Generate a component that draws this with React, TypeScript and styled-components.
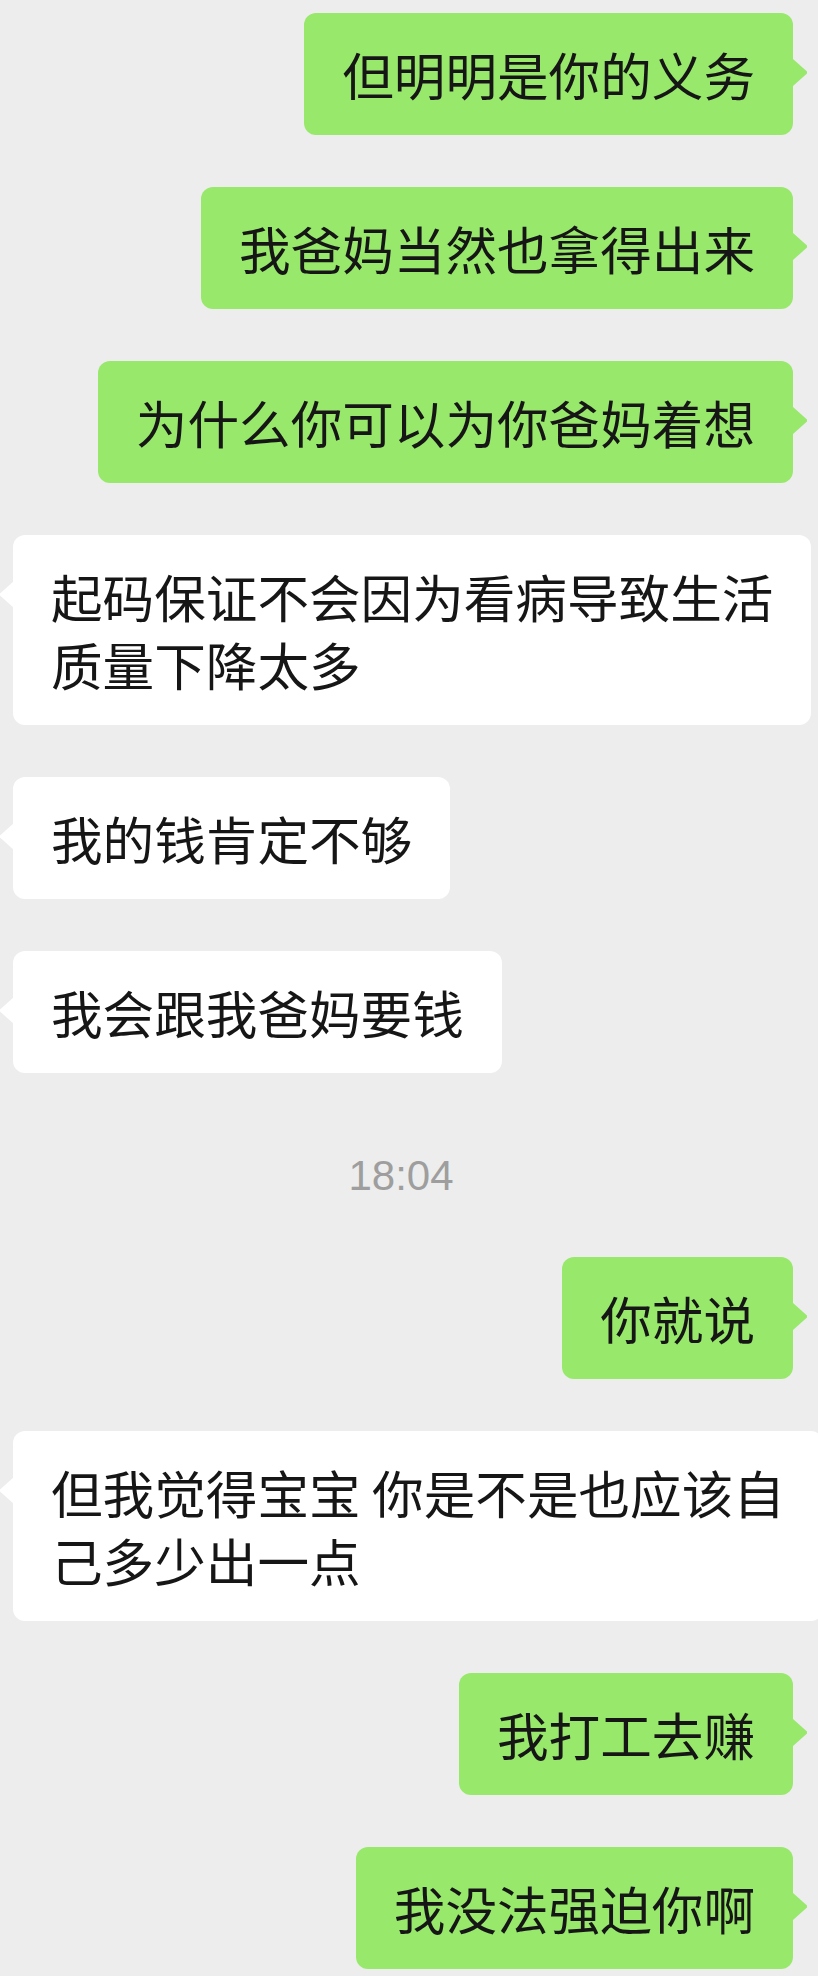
import React from 'react';
import styled, { createGlobalStyle, css } from 'styled-components';

type Side = 'me' | 'them';

type Message =
  | { kind: 'text'; id: number; side: Side; lines: string[] }
  | { kind: 'time'; id: number; label: string };

const messages: Message[] = [
  { kind: 'text', id: 1, side: 'me', lines: ['但明明是你的义务'] },
  { kind: 'text', id: 2, side: 'me', lines: ['我爸妈当然也拿得出来'] },
  { kind: 'text', id: 3, side: 'me', lines: ['为什么你可以为你爸妈着想'] },
  { kind: 'text', id: 4, side: 'them', lines: ['起码保证不会因为看病导致生活', '质量下降太多'] },
  { kind: 'text', id: 5, side: 'them', lines: ['我的钱肯定不够'] },
  { kind: 'text', id: 6, side: 'them', lines: ['我会跟我爸妈要钱'] },
  { kind: 'time', id: 7, label: '18:04' },
  { kind: 'text', id: 8, side: 'me', lines: ['你就说'] },
  { kind: 'text', id: 9, side: 'them', lines: ['但我觉得宝宝 你是不是也应该自', '己多少出一点'] },
  { kind: 'text', id: 10, side: 'me', lines: ['我打工去赚'] },
  { kind: 'text', id: 11, side: 'me', lines: ['我没法强迫你啊'] },
];

const App: React.FC = () => {
  return (
    <>
      <GlobalStyle />
      <Chat>
        {messages.map((msg) =>
          msg.kind === 'time' ? (
            <TimeStamp key={msg.id}>{msg.label}</TimeStamp>
          ) : (
            <Row key={msg.id} $side={msg.side}>
              <Bubble $side={msg.side}>
                {msg.lines.map((line, i) => (
                  <React.Fragment key={i}>
                    {i > 0 && <br />}
                    {line}
                  </React.Fragment>
                ))}
              </Bubble>
            </Row>
          ),
        )}
      </Chat>
    </>
  );
};

const GlobalStyle = createGlobalStyle`
  html, body {
    margin: 0;
    padding: 0;
    background: #ededed;
    overflow: hidden;
  }
  * {
    box-sizing: border-box;
  }
`;

const Chat = styled.div`
  width: 818px;
  min-height: 1976px;
  display: flex;
  flex-direction: column;
  gap: 52px;
  padding-top: 13px;
  overflow: hidden;
  background: #ededed;
  font-family: 'Noto Sans CJK SC', 'Noto Sans', sans-serif;
`;

const Row = styled.div<{ $side: Side }>`
  display: flex;
  min-width: 0;
  ${({ $side }) =>
    $side === 'me'
      ? css`
          justify-content: flex-end;
          padding-right: 25px;
        `
      : css`
          justify-content: flex-start;
          padding-left: 13px;
        `}
`;

const Bubble = styled.div<{ $side: Side }>`
  position: relative;
  flex-shrink: 0;
  white-space: nowrap;
  padding: 27px 38px;
  border-radius: 12px;
  font-size: 51.6px;
  line-height: 68px;
  font-weight: 400;
  color: #161616;
  background: ${({ $side }) => ($side === 'me' ? '#98e86c' : '#ffffff')};

  &::after {
    content: '';
    position: absolute;
    top: 46px;
    width: 14px;
    height: 27px;
    background: inherit;
    ${({ $side }) =>
      $side === 'me'
        ? css`
            right: -14px;
            clip-path: polygon(0 0, 100% 46%, 100% 54%, 0 100%);
          `
        : css`
            left: -13px;
            clip-path: polygon(100% 0, 0 46%, 0 54%, 100% 100%);
          `}
  }
`;

const TimeStamp = styled.div`
  height: 80px;
  padding: 26px 16px 0 0;
  text-align: center;
  font-family: 'Liberation Sans', Arial, sans-serif;
  font-size: 42px;
  line-height: 50px;
  color: #9e9e9e;
`;

export default App;
